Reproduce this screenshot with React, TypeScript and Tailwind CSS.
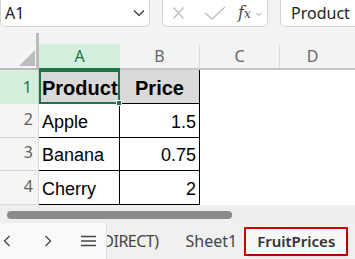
import React from 'react';

const ui = { fontFamily: '"Noto Sans", "Open Sans", sans-serif' };
const cellFont = { fontFamily: '"Liberation Sans", Arial, sans-serif' };

const rows = [
  { n: 2, a: 'Apple', b: '1.5' },
  { n: 3, a: 'Banana', b: '0.75' },
  { n: 4, a: 'Cherry', b: '2' },
];

export default function App() {
  return (
    <div className="w-[355px] h-[259px] bg-[#f3f3f3] overflow-hidden flex flex-col" style={ui}>
      {/* formula bar */}
      <div className="h-[27px] flex shrink-0">
        <div className="w-[150px] h-[32px] -mt-[5px] bg-white border border-[#d4d4d4] rounded-[5px] flex items-center justify-between pl-[4px] pr-[4px] pt-[4px]">
          <span className="text-[16px] text-[#222]">A1</span>
          <svg width="12" height="8" viewBox="0 0 12 8">
            <path d="M1 1.5 L6 6.5 L11 1.5" fill="none" stroke="#333" strokeWidth="1.2" />
          </svg>
        </div>
        <div className="ml-[12px] w-[106px] h-[32px] -mt-[5px] bg-white border border-[#d4d4d4] rounded-[5px] flex items-center pt-[4px] pl-[10px]">
          <svg width="11" height="12" viewBox="0 0 11 12">
            <path d="M0.5 0.5 L10.5 11.5 M10.5 0.5 L0.5 11.5" stroke="#b8b8b8" strokeWidth="1.2" fill="none" />
          </svg>
          <svg className="ml-[20px]" width="22" height="14" viewBox="0 0 22 14">
            <path d="M1 7 L8 13 L21 1" stroke="#b8b8b8" strokeWidth="1.2" fill="none" />
          </svg>
          <span className="ml-[12px] text-[16px] italic text-[#444] leading-none" style={{ fontFamily: '"DejaVu Serif", serif' }}>
            f<span className="text-[12px]">x</span>
          </span>
          <svg className="ml-[5px] mt-[2px]" width="6" height="5" viewBox="0 0 6 5">
            <path d="M0.5 1 L3 3.5 L5.5 1" fill="none" stroke="#999" strokeWidth="1" />
          </svg>
        </div>
        <div className="ml-[12px] flex-1 -mr-[20px] h-[32px] -mt-[5px] bg-white border border-[#d4d4d4] rounded-[5px] flex items-center pl-[10px] pt-[4px]">
          <span className="text-[16px] text-[#222]">Product</span>
        </div>
      </div>

      <div className="h-[6px] shrink-0" />

      {/* column headers */}
      <div className="h-[37px] flex shrink-0">
        <div className="w-[39px] border-r-[3px] border-b-[2px] border-[#bcbcbc] relative">
          <svg className="absolute left-[19px] top-[17px]" width="16" height="16" viewBox="0 0 16 16">
            <path d="M16 0 L16 16 L0 16 Z" fill="#bdbdbd" />
          </svg>
        </div>
        <div className="w-[81px] flex flex-col border-b-[2px] border-[#217346]">
          <div className="h-[14px]" />
          <div className="flex-1 bg-[#d3f0df] text-[#217346] text-[16px] flex items-center justify-center">A</div>
        </div>
        {['B', 'C'].map((c) => (
          <div key={c} className="w-[80px] flex flex-col border-b-[2px] border-[#c6c6c6]">
            <div className="h-[14px]" />
            <div className="flex-1 border-r border-[#dadada] text-[#666] text-[16px] flex items-center justify-center">{c}</div>
          </div>
        ))}
        <div className="flex-1 flex flex-col border-b-[2px] border-[#c6c6c6]">
          <div className="h-[14px]" />
          <div className="flex-1 text-[#666] text-[16px] flex items-center justify-center pr-[10px]">D</div>
        </div>
      </div>

      {/* row 1 */}
      <div className="h-[34px] flex shrink-0 bg-white" style={cellFont}>
        <div className="w-[39px] bg-[#d3f0df] border-r border-[#c8c8c8] text-[16px] text-[#217346] flex items-center justify-end pr-[6px]" style={ui}>
          1
        </div>
        <div className="w-[81px] relative border-[2px] border-[#217346] bg-[#d9d9d9] flex items-end pl-[1px] pb-[4px]">
          <span className="text-[20px] font-bold text-black leading-none">Product</span>
          <div className="absolute -right-[4px] -bottom-[4px] w-[6px] h-[6px] bg-[#217346] border border-white" />
        </div>
        <div className="w-[80px] bg-[#d9d9d9] border-r border-b border-black flex items-end justify-center pb-[5px]">
          <span className="text-[20px] font-bold text-black leading-none">Price</span>
        </div>
        <div className="flex-1" />
      </div>

      {/* rows 2-4 */}
      {rows.map((r) => (
        <div key={r.n} className={`${r.n === 3 ? 'h-[33px]' : 'h-[34px]'} flex shrink-0 bg-white`} style={cellFont}>
          <div className="w-[39px] bg-[#f5f5f5] border-r border-b border-[#d6d6d6] text-[16px] text-[#616161] flex items-end justify-end pr-[5px] pb-[6px]" style={ui}>
            {r.n}
          </div>
          <div className="w-[81px] border-r border-b border-black flex items-end pl-[3px] pb-[6px]">
            <span className="text-[18px] text-black leading-none">{r.a}</span>
          </div>
          <div className="w-[80px] border-r border-b border-black flex items-end justify-end pr-[3px] pb-[6px]">
            <span className="text-[18px] text-black leading-none">{r.b}</span>
          </div>
          <div className="flex-1" />
        </div>
      ))}

      {/* horizontal scrollbar */}
      <div className="h-[18px] shrink-0 bg-[#efefef] pt-[6px] pl-[7px]">
        <div className="w-[225px] h-[8px] rounded-full bg-[#8a8a8a]" />
      </div>

      {/* sheet tabs */}
      <div className="flex-1 flex">
        <div className="w-[107px] bg-[#f9f9f9] border-r border-[#dedede] flex items-center text-[#444]">
          <svg className="ml-[3px]" width="8" height="12" viewBox="0 0 8 12">
            <path d="M6.5 1 L1.5 6 L6.5 11" fill="none" stroke="#444" strokeWidth="1.3" />
          </svg>
          <svg className="ml-[33px]" width="8" height="12" viewBox="0 0 8 12">
            <path d="M1.5 1 L6.5 6 L1.5 11" fill="none" stroke="#444" strokeWidth="1.3" />
          </svg>
          <svg className="ml-[29px]" width="15" height="12" viewBox="0 0 15 12">
            <path d="M0 1.5 H15 M0 6 H15 M0 10.5 H15" stroke="#444" strokeWidth="1.3" />
          </svg>
        </div>
        <div className="flex-1 bg-[#f0f0f0] flex items-center overflow-hidden relative">
          <span className="text-[16px] text-[#444] -ml-[9px] whitespace-nowrap tracking-[-0.5px]">(DIRECT)</span>
          <span className="text-[16px] text-[#444] ml-[27px] whitespace-nowrap">Sheet1</span>
          <div className="ml-[7px] h-[29px] w-[104px] border-[2px] border-[#e00000] flex items-center justify-center">
            <div className="w-full h-full bg-[#f7f7f7] shadow-[1px_1px_3px_rgba(0,0,0,0.35)] flex items-center justify-center">
              <span className="text-[15px] font-semibold text-[#333] whitespace-nowrap">FruitPrices</span>
            </div>
          </div>
        </div>
      </div>
    </div>
  );
}
